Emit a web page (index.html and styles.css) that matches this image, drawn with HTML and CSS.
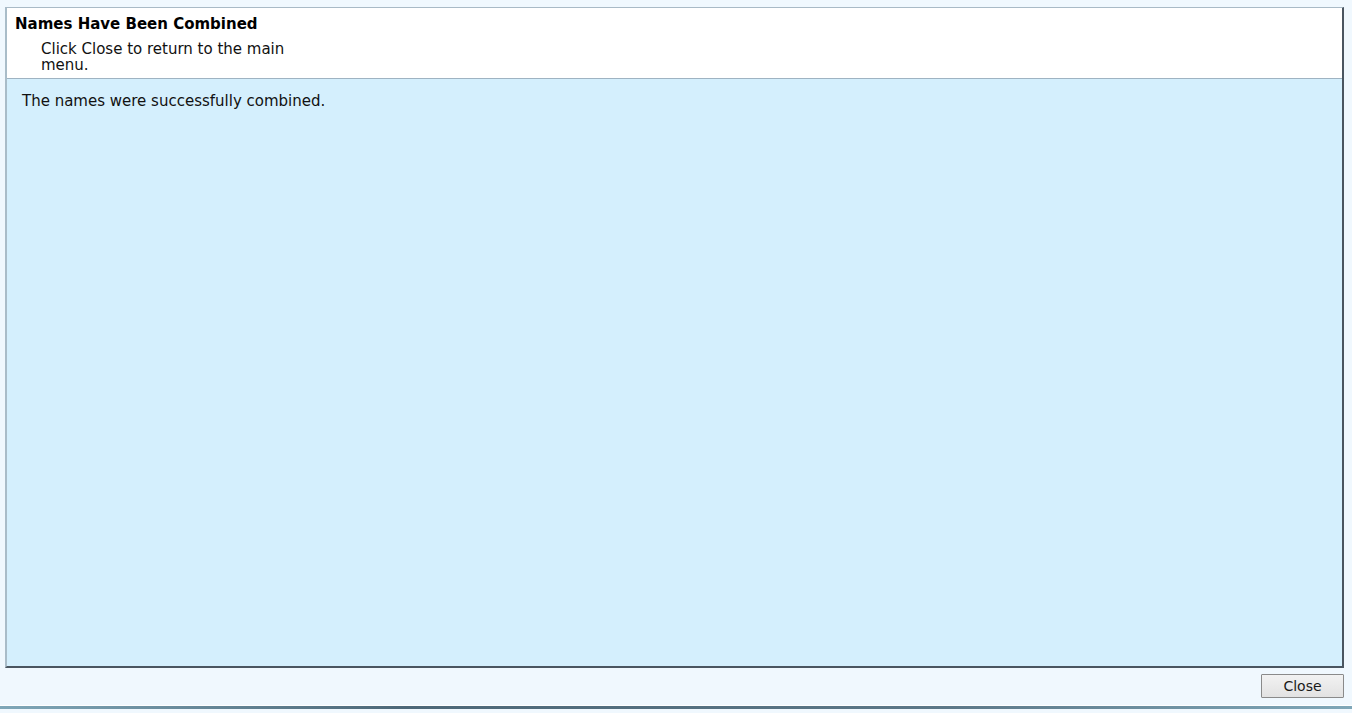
FILE: index.html
```html
<!DOCTYPE html>
<html>
<head>
<meta charset="utf-8">
<link rel="stylesheet" href="styles.css">
</head>
<body>
<div class="page">
  <div class="panel">
    <div class="header">
      <div class="title">Names Have Been Combined</div>
      <div class="subtitle">Click Close to return to the main menu.</div>
    </div>
    <div class="content">
      <p class="message">The names were successfully combined.</p>
    </div>
  </div>
  <div class="footer">
    <button class="close-btn">Close</button>
  </div>
  <div class="bottom-line"></div>
</div>
</body>
</html>
```
FILE: styles.css
```css
html, body {
  margin: 0;
  padding: 0;
  background: #f0f8fe;
  font-family: "DejaVu Sans", Verdana, sans-serif;
  font-size: 15px;
  color: #111;
}
.page {
  height: 713px;
  display: flex;
  flex-direction: column;
  padding-top: 7px;
  box-sizing: border-box;
}
.panel {
  margin: 0 8px 0 5px;
  height: 661px;
  display: flex;
  flex-direction: column;
  border-top: 1px solid #a9bac6;
  border-left: 2px solid #a9bcc8;
  border-right: 2px solid #4a5560;
  border-bottom: 2px solid #4a5560;
  box-sizing: border-box;
}
.header {
  background: #ffffff;
  height: 71px;
  box-sizing: border-box;
  border-bottom: 1px solid #9fb3c2;
  padding: 7px 8px 0 8px;
}
.title {
  font-weight: bold;
  color: #000;
  line-height: 18px;
}
.subtitle {
  margin-left: 26px;
  margin-top: 8px;
  width: 262px;
  line-height: 16px;
  color: #111;
}
.content {
  flex: 1;
  background: #d4effd;
  padding: 13px 15px;
}
.message {
  margin: 0;
  line-height: 18px;
}
.footer {
  height: 37px;
  display: flex;
  justify-content: flex-end;
  align-items: center;
  padding-right: 8px;
  box-sizing: border-box;
}
.close-btn {
  width: 83px;
  height: 24px;
  font-family: "DejaVu Sans", Verdana, sans-serif;
  font-size: 14px;
  color: #1a1a1a;
  background: linear-gradient(#f2f2f2, #e2e2e2);
  border: 1px solid #8a8a8a;
  border-radius: 1px;
  padding: 0;
  margin-top: -1px;
}
.bottom-line {
  height: 3px;
  border-top: 1px solid #ffffff;
  background: linear-gradient(90deg, #7fa7b8, #4d6878 30%, #5c7888 70%, #7fa7b8);
}
```
